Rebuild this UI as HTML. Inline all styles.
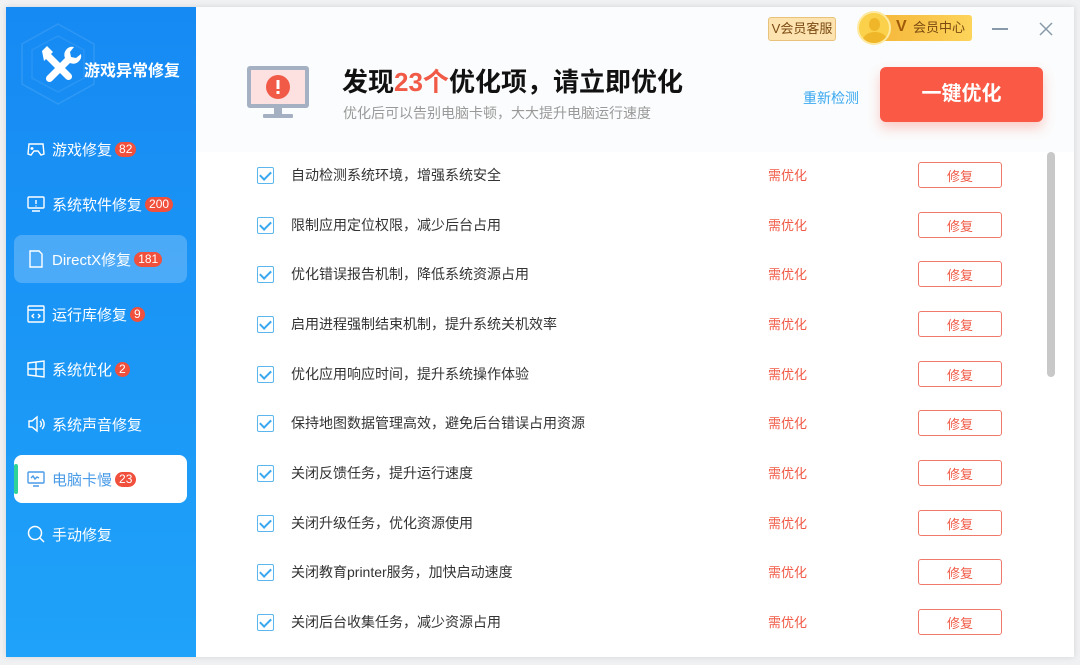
<!DOCTYPE html>
<html><head><meta charset="utf-8"><style>
*{margin:0;padding:0;box-sizing:border-box}
body{width:1080px;height:665px;background:#f0f1f3;font-family:"Liberation Sans","Noto Sans CJK SC",sans-serif;position:relative;overflow:hidden}
.win{position:absolute;left:6px;top:7px;width:1068px;height:650px;background:#fff;box-shadow:0 0 6px rgba(0,0,0,.12)}
.side{position:absolute;left:0;top:0;width:190px;height:650px;background:linear-gradient(180deg,#168af3,#1fa2f9)}
.logo{position:absolute;color:#fff;font-size:15px;font-weight:bold}
.nav{position:absolute;left:8px;width:173px;height:48px;color:#fff;font-size:15px;display:flex;align-items:center;padding-left:12px;border-radius:8px}
.nav svg{width:20px;height:20px;margin-right:6px;flex:none}
.b{background:#f0503c;color:#fff;font-size:12px;border-radius:8px;padding:0 4px;height:15px;line-height:15px;margin-left:3px}
.head{position:absolute;left:190px;top:0;width:878px;height:145px;background:#fbfcfd}
.row{position:absolute;left:190px;width:850px;height:50px}
.cb{position:absolute;left:61px;top:17px;width:17px;height:17px;border:1.5px solid #5bb6ee;border-radius:2px}
.t{position:absolute;left:95px;top:15px;font-size:14px;color:#333}
.n{position:absolute;left:572px;top:15px;font-size:13px;color:#f05a46}
.btn{position:absolute;left:722px;top:12px;width:84px;height:26px;border:1px solid #f07a6a;border-radius:3px;color:#f05a46;font-size:13px;display:flex;align-items:center;justify-content:center}
</style></head><body><div class="win">
<div class="side">
<svg style="position:absolute;left:12px;top:14px" width="80" height="86" viewBox="0 0 80 86"><polygon points="40,3 76,23 76,63 40,83 4,63 4,23" fill="none" stroke="rgba(255,255,255,.1)" stroke-width="1.5"/><polygon points="40,15 66,29 66,57 40,71 14,57 14,29" fill="none" stroke="rgba(255,255,255,.08)" stroke-width="1.5"/>
<path d="M24 30 l5-5 6 6 -2 2 20 20 a3 3 0 0 1 -5 5 l-20-20 -2 2z" fill="#fff"/><path d="M56 26 a8 8 0 0 0 -9 11 l-18 18 a3.5 3.5 0 0 0 5 5 l18-18 a8 8 0 0 0 11-9 l-5 4 -5-1 -1-5z" fill="#fff"/></svg>
<div class="logo" style="left:78px;top:50px;font-size:16px">游戏异常修复</div>
<div class="nav" style="top:118px"><svg viewBox="0 0 20 20" fill="none" stroke="#fff" stroke-width="1.4"><path d="M3 5h14l1 10-3 1-3-4H8l-3 4-3-1z"/><path d="M6 8v3M4.5 9.5h3"/></svg>游戏修复<span class="b">82</span></div>
<div class="nav" style="top:173px"><svg viewBox="0 0 20 20" fill="none" stroke="#fff" stroke-width="1.4"><rect x="2" y="3" width="16" height="11" rx="1"/><path d="M10 6v4M10 11.5v1M6 17h8"/></svg>系统软件修复<span class="b">200</span></div>
<div class="nav" style="top:228px;background:rgba(255,255,255,.22)"><svg viewBox="0 0 20 20" fill="none" stroke="#fff" stroke-width="1.4"><path d="M4 2h9l3 3v13H4z"/></svg>DirectX修复<span class="b">181</span></div>
<div class="nav" style="top:283px"><svg viewBox="0 0 20 20" fill="none" stroke="#fff" stroke-width="1.4"><rect x="2" y="2" width="16" height="16" rx="1"/><path d="M2 6h16M8 10l-2 2 2 2M12 10l2 2-2 2"/></svg>运行库修复<span class="b">9</span></div>
<div class="nav" style="top:338px"><svg viewBox="0 0 20 20" fill="none" stroke="#fff" stroke-width="1.4"><path d="M2 4l16-2v16l-16-2zM10 3v14M2 10h16"/></svg>系统优化<span class="b">2</span></div>
<div class="nav" style="top:393px"><svg viewBox="0 0 20 20" fill="none" stroke="#fff" stroke-width="1.4"><path d="M3 7h3l5-4v14l-5-4H3zM14 7a4 4 0 0 1 0 6M16 5a7 7 0 0 1 0 10"/></svg>系统声音修复</div>
<div class="nav" style="top:448px;background:#fff;color:#4a9be8"><div style="position:absolute;left:0;top:9px;width:4px;height:30px;background:#2fd39a;border-radius:2px"></div><svg viewBox="0 0 20 20" fill="none" stroke="#4a9be8" stroke-width="1.4"><rect x="2" y="3" width="16" height="11" rx="1"/><path d="M5 9l2-2 2 3 2-2 2 1M7 17h6"/></svg>电脑卡慢<span class="b">23</span></div>
<div class="nav" style="top:503px"><svg viewBox="0 0 20 20" fill="none" stroke="#fff" stroke-width="1.5"><circle cx="9" cy="9" r="6.5"/><path d="M14 14l4 4"/></svg>手动修复</div>
</div>
<div class="head">
<svg style="position:absolute;left:50px;top:58px" width="64" height="54" viewBox="0 0 64 54"><rect x="1" y="1" width="62" height="42" rx="3" fill="#a5b1c2"/><rect x="5" y="5" width="54" height="34" fill="#fde1e1"/><rect x="28" y="43" width="8" height="6" fill="#a5b1c2"/><rect x="17" y="49" width="30" height="4" rx="1" fill="#a5b1c2"/><circle cx="32" cy="22" r="12" fill="#f05a46"/><rect x="30.5" y="15" width="3" height="9" fill="#fff"/><rect x="30.5" y="26" width="3" height="3" fill="#fff"/></svg>
<div style="position:absolute;left:146px;top:55px;font-size:26px;font-weight:bold;color:#111">发现<span style="color:#f05a46">23个</span>优化项，请立即优化</div>
<div style="position:absolute;left:147px;top:96px;font-size:14px;color:#999">优化后可以告别电脑卡顿，大大提升电脑运行速度</div>
<div style="position:absolute;left:572px;top:10px;width:68px;height:24px;background:#fde3b0;border:1px solid #e8c27a;border-radius:3px;font-size:13px;color:#7a4a10;text-align:center;line-height:22px">V会员客服</div>
<div style="position:absolute;left:680px;top:8px;width:96px;height:26px;background:linear-gradient(90deg,#f4b63a,#fdd45a);border-radius:3px;font-size:13px;color:#7a4a10;line-height:26px;padding-left:37px">会员中心</div>
<div style="position:absolute;left:700px;top:11px;font-size:16px;font-weight:bold;color:#a05a0a">V</div>
<div style="position:absolute;left:661px;top:4px;width:34px;height:34px;border-radius:50%;background:#fbd04a;border:2px solid #fde9a0;overflow:hidden"><div style="position:absolute;left:10px;top:5px;width:11px;height:13px;border-radius:50%;background:#f0b62a"></div><div style="position:absolute;left:4px;top:19px;width:24px;height:16px;border-radius:50% 50% 0 0;background:#f0b62a"></div></div>
<div style="position:absolute;left:796px;top:21px;width:16px;height:1.5px;background:#8899aa"></div>
<svg style="position:absolute;left:842px;top:14px" width="16" height="16"><path d="M2 2l12 12M14 2L2 14" stroke="#8899aa" stroke-width="1.5"/></svg>
<div style="position:absolute;left:607px;top:81px;font-size:14px;color:#3aa8f0">重新检测</div>
<div style="position:absolute;left:684px;top:60px;width:163px;height:55px;background:#fa5a45;border-radius:6px;box-shadow:0 6px 12px rgba(250,90,69,.3);color:#fff;font-size:20px;font-weight:bold;text-align:center;line-height:55px">一键优化</div>
</div>
<div style="position:absolute;left:1041px;top:145px;width:8px;height:225px;background:#c8c8c8;border-radius:4px"></div>
<div class="row" style="top:143px"><div class="cb"></div><div class="t">自动检测系统环境，增强系统安全</div><div class="n">需优化</div><div class="btn">修复</div></div>
<div class="row" style="top:193px"><div class="cb"></div><div class="t">限制应用定位权限，减少后台占用</div><div class="n">需优化</div><div class="btn">修复</div></div>
<div class="row" style="top:242px"><div class="cb"></div><div class="t">优化错误报告机制，降低系统资源占用</div><div class="n">需优化</div><div class="btn">修复</div></div>
<div class="row" style="top:292px"><div class="cb"></div><div class="t">启用进程强制结束机制，提升系统关机效率</div><div class="n">需优化</div><div class="btn">修复</div></div>
<div class="row" style="top:342px"><div class="cb"></div><div class="t">优化应用响应时间，提升系统操作体验</div><div class="n">需优化</div><div class="btn">修复</div></div>
<div class="row" style="top:391px"><div class="cb"></div><div class="t">保持地图数据管理高效，避免后台错误占用资源</div><div class="n">需优化</div><div class="btn">修复</div></div>
<div class="row" style="top:441px"><div class="cb"></div><div class="t">关闭反馈任务，提升运行速度</div><div class="n">需优化</div><div class="btn">修复</div></div>
<div class="row" style="top:491px"><div class="cb"></div><div class="t">关闭升级任务，优化资源使用</div><div class="n">需优化</div><div class="btn">修复</div></div>
<div class="row" style="top:540px"><div class="cb"></div><div class="t">关闭教育printer服务，加快启动速度</div><div class="n">需优化</div><div class="btn">修复</div></div>
<div class="row" style="top:590px"><div class="cb"></div><div class="t">关闭后台收集任务，减少资源占用</div><div class="n">需优化</div><div class="btn">修复</div></div>
</div>
<style>.cb::after{content:"";position:absolute;left:4px;top:1px;width:5px;height:9px;border:solid #3aa8f0;border-width:0 2px 2px 0;transform:rotate(45deg)}</style>
</body></html>
